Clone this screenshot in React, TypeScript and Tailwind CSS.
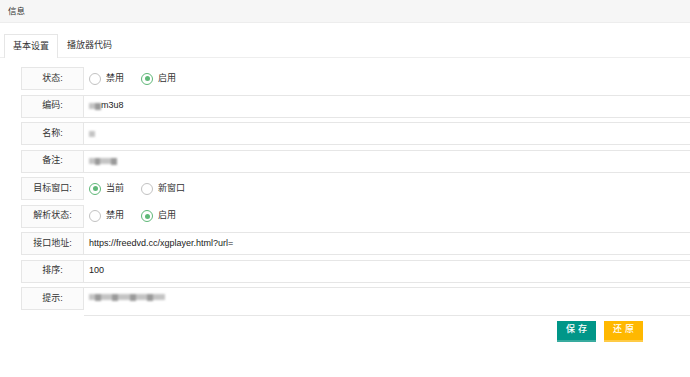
import React from "react";

const font = { fontFamily: '"Liberation Sans", "Noto Sans CJK SC", sans-serif' };

function Radio({ label, checked }: { label: string; checked?: boolean }) {
  return (
    <div className="flex items-center mr-[17px]">
      <span
        className={
          checked
            ? "w-[12px] h-[12px] rounded-full border border-[#5FB878] flex items-center justify-center"
            : "w-[12px] h-[12px] rounded-full border border-[#c2c2c2]"
        }
      >
        {checked && <span className="w-[5px] h-[5px] rounded-full bg-[#5FB878]" />}
      </span>
      <span className="ml-[5px] text-[9px] text-[#333]">{label}</span>
    </div>
  );
}

function Blur({ w }: { w: number }) {
  return (
    <span className="inline-flex items-center h-[10px] blur-[1.2px]" style={{ width: w }}>
      {Array.from({ length: Math.max(1, Math.round(w / 6)) }).map((_, i) => (
        <span
          key={i}
          className={i % 3 === 1 ? "h-[7px] flex-1 bg-[#9a9a9a]" : "h-[6px] flex-1 bg-[#c4c4c4]"}
        />
      ))}
    </span>
  );
}

function Row({
  label,
  children,
  box = true,
  tall = false,
}: {
  label: string;
  children: React.ReactNode;
  box?: boolean;
  tall?: boolean;
}) {
  return (
    <div className="flex mb-[4.5px]">
      <div className="w-[63px] h-[23px] shrink-0 border border-[#e6e6e6] bg-[#fbfbfb] flex items-center justify-center text-[9px] text-[#333]">
        {label}
      </div>
      {box ? (
        <div
          className={
            tall
              ? "flex-1 h-[29px] border border-[#e6e6e6] border-l-0 pl-[5px] pt-[4px] flex items-start text-[9px] text-[#222]"
              : "flex-1 h-[23px] border border-[#e6e6e6] border-l-0 pl-[5px] flex items-center text-[9px] text-[#222]"
          }
        >
          {children}
        </div>
      ) : (
        <div className="flex-1 h-[23px] pl-[5px] flex items-center">{children}</div>
      )}
    </div>
  );
}

export default function App() {
  return (
    <div className="w-[690px] h-[377px] overflow-hidden bg-white" style={font}>
      <div className="h-[23px] bg-[#f6f6f6] border-b border-[#ededed] flex items-center pl-[8px] text-[8.5px] text-[#333]">
        信息
      </div>

      <div className="mt-[11px] flex border-b border-[#eeeeee] pl-[4px] h-[24px]">
        <div className="w-[54px] h-[24px] border border-[#e6e6e6] border-b-0 bg-white -mb-px flex items-center justify-center text-[9px] text-[#333]">
          基本设置
        </div>
        <div className="h-[23px] px-[9px] flex items-center text-[9px] text-[#333]">播放器代码</div>
      </div>

      <div className="pt-[9px] pl-[21px] w-[720px]">
        <Row label="状态:" box={false}>
          <Radio label="禁用" />
          <Radio label="启用" checked />
        </Row>
        <Row label="编码:">
          <Blur w={12} />
          <span>m3u8</span>
        </Row>
        <Row label="名称:">
          <Blur w={6} />
        </Row>
        <Row label="备注:">
          <Blur w={28} />
        </Row>
        <Row label="目标窗口:" box={false}>
          <Radio label="当前" checked />
          <Radio label="新窗口" />
        </Row>
        <Row label="解析状态:" box={false}>
          <Radio label="禁用" />
          <Radio label="启用" checked />
        </Row>
        <Row label="接口地址:">https://freedvd.cc/xgplayer.html?url=</Row>
        <Row label="排序:">100</Row>
        <Row label="提示:" tall>
          <Blur w={76} />
        </Row>
      </div>

      <div className="flex gap-[8px] pl-[557px] mt-[2px]">
        <button className="w-[39px] h-[21px] bg-[#009688] border-b-2 border-[#38ab9f] text-white text-[9px] font-medium tracking-[3px] pl-[3px]">
          保存
        </button>
        <button className="w-[39px] h-[21px] bg-[#FFB800] border-b-2 border-[#ffcb45] text-white text-[9px] font-medium tracking-[3px] pl-[3px]">
          还原
        </button>
      </div>
    </div>
  );
}
